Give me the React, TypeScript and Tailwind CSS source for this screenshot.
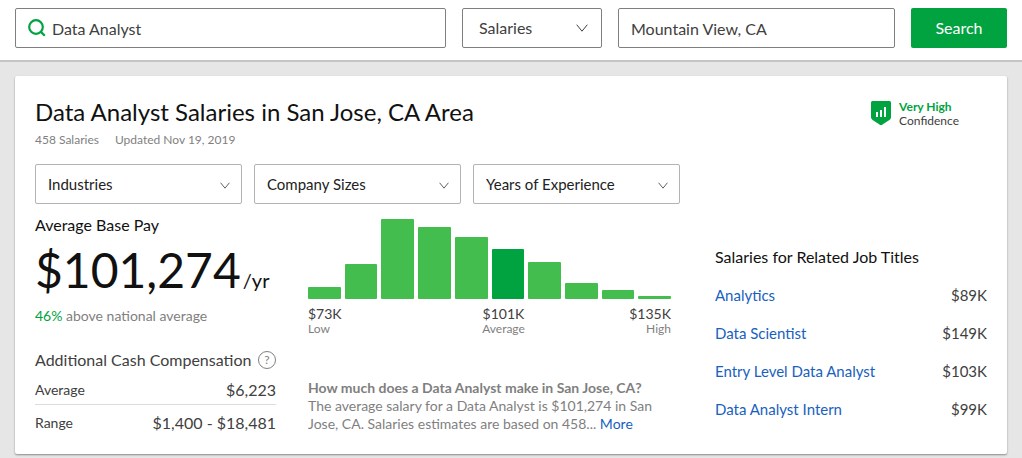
import { useState } from 'react'

const filters = ['Industries', 'Company Sizes', 'Years of Experience']

const distribution = [12, 35, 80, 72, 62, 50, 37, 16, 9, 3]
const averageIndex = 5

const relatedJobs = [
  { title: 'Analytics', pay: '$89K' },
  { title: 'Data Scientist', pay: '$149K' },
  { title: 'Entry Level Data Analyst', pay: '$103K' },
  { title: 'Data Analyst Intern', pay: '$99K' },
]

function Chevron({ className }: { className: string }) {
  return (
    <svg viewBox="0 0 12 8" fill="none" stroke="currentColor" className={className} aria-hidden="true">
      <path d="M0.7 0.7 6 7.2 11.3 0.7" />
    </svg>
  )
}

function SearchIcon() {
  return (
    <svg
      viewBox="0 0 18 18"
      fill="none"
      stroke="currentColor"
      strokeWidth="2.2"
      className="size-[18px] shrink-0 text-[#00a340]"
      aria-hidden="true"
    >
      <circle cx="8" cy="8" r="6.8" />
      <path d="m12.4 12.4 4.4 4.4" />
    </svg>
  )
}

function ConfidenceBadge() {
  return (
    <div className="mr-7 flex items-start gap-2 pt-1">
      <svg viewBox="0 0 20 25" className="h-[25px] w-5" aria-hidden="true">
        <path
          d="M1.5 1h17A1.5 1.5 0 0 1 20 2.5v14.700c0 1.200-.6 2.200-1.600 2.800l-7.300 4.700a2 2 0 0 1-2.200 0L1.600 20A3.400 3.400 0 0 1 0 17.200V2.500A1.500 1.500 0 0 1 1.500 1Z"
          fill="#00a340"
        />
        <path d="M5 12h2v5H5zM9 10h2v7H9zM13 7h2v10h-2z" fill="#fff" />
      </svg>
      <p className="text-xs leading-[14px] text-[#404040]">
        <strong className="block font-bold text-[#00a340]">Very High</strong>
        Confidence
      </p>
    </div>
  )
}

function SearchBar() {
  const [keyword, setKeyword] = useState('Data Analyst')
  const [location, setLocation] = useState('Mountain View, CA')

  return (
    <header className="border-b-2 border-[#c4c4c4] bg-white px-[15px] pt-2 pb-3">
      <form
        className="grid grid-cols-[431fr_140px_277fr_96px] gap-4"
        onSubmit={(event) => event.preventDefault()}
      >
        <label className="flex h-10 min-w-0 items-center gap-1.5 rounded-xs border border-[#7f7f7f] px-3">
          <SearchIcon />
          <input
            aria-label="Job title"
            value={keyword}
            onChange={(event) => setKeyword(event.target.value)}
            className="h-full min-w-0 flex-1 text-base outline-none"
          />
        </label>
        <div className="relative h-10">
          <select
            aria-label="Category"
            className="size-full appearance-none rounded-xs border border-[#7f7f7f] bg-white px-4 text-base"
          >
            <option>Salaries</option>
            <option>Jobs</option>
            <option>Companies</option>
          </select>
          <Chevron className="pointer-events-none absolute top-4 right-3.5 h-2 w-3" />
        </div>
        <input
          aria-label="Location"
          value={location}
          onChange={(event) => setLocation(event.target.value)}
          className="h-10 min-w-0 rounded-xs border border-[#7f7f7f] px-3 text-base outline-none"
        />
        <button type="submit" className="h-10 rounded-xs bg-[#00a340] text-base text-white">
          Search
        </button>
      </form>
    </header>
  )
}

function BasePay() {
  return (
    <section className="pt-[11px]">
      <h2 className="text-base leading-5 text-[#111]">Average Base Pay</h2>
      <p className="mt-[7px] flex items-baseline gap-0.5 text-[#111]">
        <span className="text-5xl leading-[56px]">$101,274</span>
        <span className="text-xl leading-6">/yr</span>
      </p>
      <p className="mt-2 text-sm leading-5 text-[#7f7f7f]">
        <span className="text-[#00a340]">46%</span> above national average
      </p>

      <div className="mt-6 flex items-center justify-between">
        <h3 className="text-base leading-5">Additional Cash Compensation</h3>
        <button
          type="button"
          aria-label="About additional cash compensation"
          className="size-[18px] rounded-full border border-[#7f7f7f] text-xs leading-4 text-[#7f7f7f]"
        >
          ?
        </button>
      </div>
      <table className="mt-1.5 w-full">
        <tbody>
          <tr className="h-7 border-b border-[#dcdcdc]">
            <th scope="row" className="text-left text-sm font-normal">
              Average
            </th>
            <td className="text-right text-base">$6,223</td>
          </tr>
          <tr className="h-[38px]">
            <th scope="row" className="text-left text-sm font-normal">
              Range
            </th>
            <td className="text-right text-base">$1,400 - $18,481</td>
          </tr>
        </tbody>
      </table>
    </section>
  )
}

function Distribution() {
  return (
    <section className="pt-[15px]">
      <div className="flex h-20 items-end gap-1">
        {distribution.map((height, index) => (
          <div
            key={index}
            className={`flex-1 rounded-[1px] ${index === averageIndex ? 'bg-[#00a340]' : 'bg-[#43bd4e]'}`}
            style={{ height }}
          />
        ))}
      </div>
      <div className="mt-[7px] grid grid-cols-[1fr_auto_1fr] text-xs leading-[14px] text-[#7f7f7f]">
        <p>
          <span className="block text-sm leading-4 text-[#404040]">$73K</span>
          Low
        </p>
        <p className="pl-7 text-center">
          <span className="block text-sm leading-4 text-[#404040]">$101K</span>
          Average
        </p>
        <p className="text-right">
          <span className="block text-sm leading-4 text-[#404040]">$135K</span>
          High
        </p>
      </div>
      <div className="mt-[43px] text-sm leading-[18px] text-[#7f7f7f]">
        <h2 className="font-bold">How much does a Data Analyst make in San Jose, CA?</h2>
        <p>
          The average salary for a Data Analyst is $101,274 in San Jose, CA. Salaries estimates are based on 458...{' '}
          <a href="#more" className="text-[#1861bf]">
            More
          </a>
        </p>
      </div>
    </section>
  )
}

function RelatedJobs() {
  return (
    <section className="pt-[43px] pl-3">
      <h2 className="text-base leading-5 text-[#111]">Salaries for Related Job Titles</h2>
      <ul className="mt-[9px]">
        {relatedJobs.map(({ title, pay }) => (
          <li key={title} className="flex h-[38px] items-center justify-between text-[15px]">
            <a href="#related" className="text-[#1861bf]">
              {title}
            </a>
            <span>{pay}</span>
          </li>
        ))}
      </ul>
    </section>
  )
}

export default function App() {
  return (
    <div className="min-h-screen bg-[#e6e6e6] font-['Lato',sans-serif] text-[#404040]">
      <SearchBar />
      <main className="px-[15px] pt-3.5 pb-1">
        <div className="rounded-xs bg-white px-5 pt-5 pb-3 shadow-[0_1px_2px_rgba(0,0,0,0.4)]">
          <div className="flex items-start justify-between">
            <div>
              <h1 className="text-2xl text-[#111]">Data Analyst Salaries in San Jose, CA Area</h1>
              <p className="mt-1 flex gap-4 text-xs text-[#7f7f7f]">
                <span>458 Salaries</span>
                <span>Updated Nov 19, 2019</span>
              </p>
            </div>
            <ConfidenceBadge />
          </div>

          <div className="mt-4 flex gap-3">
            {filters.map((filter) => (
              <div key={filter} className="relative h-10 w-[207px]">
                <select
                  aria-label={filter}
                  className="size-full appearance-none rounded-xs border border-[#b3b3b3] bg-white px-3 text-[15px] text-[#222]"
                >
                  <option>{filter}</option>
                </select>
                <Chevron className="pointer-events-none absolute top-[18px] right-3 h-[7px] w-2.5" />
              </div>
            ))}
          </div>

          <div className="grid grid-cols-[241fr_363fr_284fr] gap-8">
            <BasePay />
            <Distribution />
            <RelatedJobs />
          </div>
        </div>
      </main>
    </div>
  )
}
